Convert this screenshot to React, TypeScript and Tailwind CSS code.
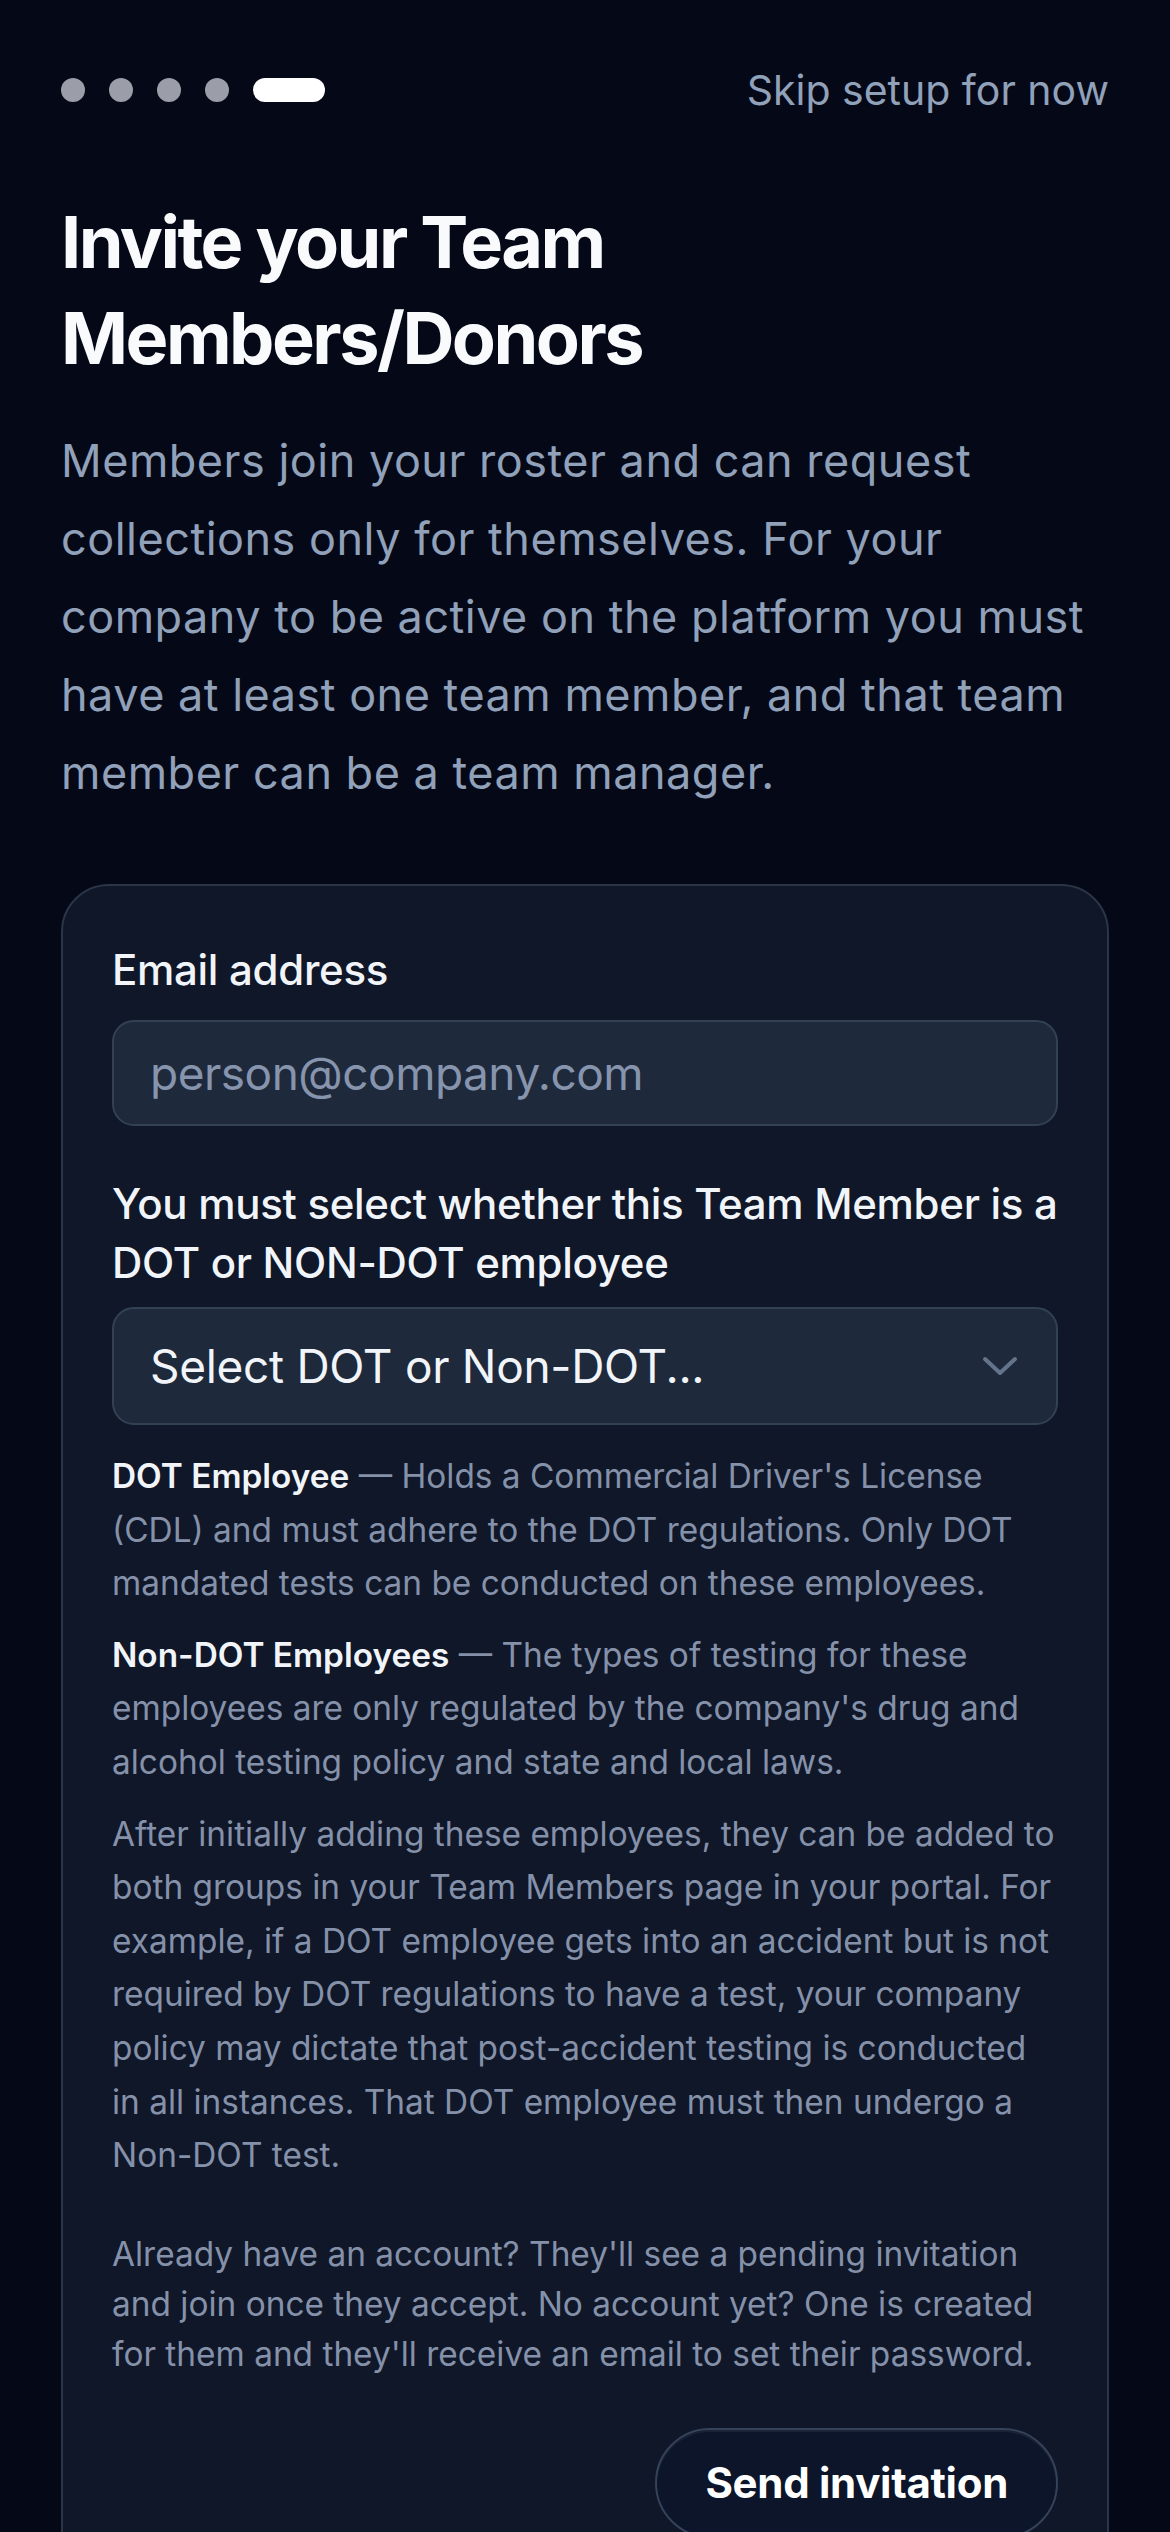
import { useState } from 'react';

type Kind = '' | 'DOT' | 'NON_DOT';

export default function App() {
  const [email, setEmail] = useState('');
  const [kind] = useState<Kind>('');

  return (
    <div className="min-h-screen w-full bg-[#050817] px-[61px] pt-[60px] font-['Inter',sans-serif] antialiased">
      {/* progress dots + skip */}
      <div className="flex h-[60px] items-center justify-between">
        <div className="flex items-center gap-6">
          {[0, 1, 2, 3].map((i) => (
            <span key={i} className="h-6 w-6 rounded-full bg-[#9b9ea8]" />
          ))}
          <span className="h-6 w-[72px] rounded-full bg-white" />
        </div>
        <button className="text-[41px] leading-[60px] text-slate-400">Skip setup for now</button>
      </div>

      <h1 className="mt-[74px] text-[72px] font-bold leading-[96px] tracking-[-0.035em] text-slate-50">
        Invite your Team Members/Donors
      </h1>
      <p className="mt-9 text-[45px] leading-[78px] tracking-[0.5px] text-slate-400">
        Members join your roster and can request collections only for themselves. For your company to
        be active on the platform you must have at least one team member, and that team member can be a
        team manager.
      </p>

      {/* invite card */}
      <div className="mt-[72px] rounded-[48px] border-2 border-[#2a3548] bg-[#0f1729] px-[49px] pt-[54px] pb-[80px]">
        <label className="mb-5 block text-[42px] font-medium leading-[60px] tracking-[-0.3px] text-slate-100">
          Email address
        </label>
        <input
          type="email"
          value={email}
          onChange={(e) => setEmail(e.target.value)}
          placeholder="person@company.com"
          className="h-[106px] w-full rounded-[22px] border-2 border-[#334155] bg-[#1e293b] px-9 text-[46px] tracking-[-0.5px] text-slate-100 outline-none placeholder:text-[#8794ad]"
        />

        <p className="mt-12 mb-[15px] text-[42px] font-medium leading-[59px] tracking-[-0.3px] text-slate-100">
          You must select whether this Team Member is a DOT or NON-DOT employee
        </p>
        <div className="flex h-[118px] w-full items-center justify-between rounded-[22px] border-2 border-[#334155] bg-[#1e293b] pl-9 pr-[38px]">
          <span className="text-[46px] tracking-[-0.3px] text-slate-100">
            {kind === '' ? 'Select DOT or Non-DOT...' : kind === 'DOT' ? 'DOT' : 'Non-DOT'}
          </span>
          <svg width="36" height="22" viewBox="0 0 36 22" fill="none">
            <path d="M3 4 L18 18 L33 4" stroke="#64748b" strokeWidth="4" strokeLinecap="round" strokeLinejoin="round" />
          </svg>
        </div>

        <div className="mt-[25px] space-y-[18px] text-[33.4px] leading-[53.6px] text-[#8591a9]">
          <p>
            <span className="font-semibold text-slate-100">DOT Employee</span> — Holds a Commercial
            Driver's License (CDL) and must adhere to the DOT regulations. Only DOT mandated tests can be
            conducted on these employees.
          </p>
          <p>
            <span className="font-semibold text-slate-100">Non-DOT Employees</span> — The types of
            testing for these employees are only regulated by the company's drug and alcohol testing
            policy and state and local laws.
          </p>
          <p>
            After initially adding these employees, they can be added to both groups in your Team Members
            page in your portal. For example, if a DOT employee gets into an accident but is not required
            by DOT regulations to have a test, your company policy may dictate that post-accident testing is
            conducted in all instances. That DOT employee must then undergo a Non-DOT test.
          </p>
        </div>

        <p className="mt-[46px] text-[33.4px] leading-[50px] text-[#8591a9]">
          Already have an account? They'll see a pending invitation and join once they accept. No account
          yet? One is created for them and they'll receive an email to set their password.
        </p>

        <div className="mt-[49px] flex justify-end">
          <button className="h-[110px] rounded-full border-2 border-[#34425a] bg-[#0c1529] px-12 text-[42px] font-bold tracking-[-0.3px] text-white shadow-[inset_0_2px_0_rgba(255,255,255,0.06)]">
            Send invitation
          </button>
        </div>
      </div>
    </div>
  );
}
